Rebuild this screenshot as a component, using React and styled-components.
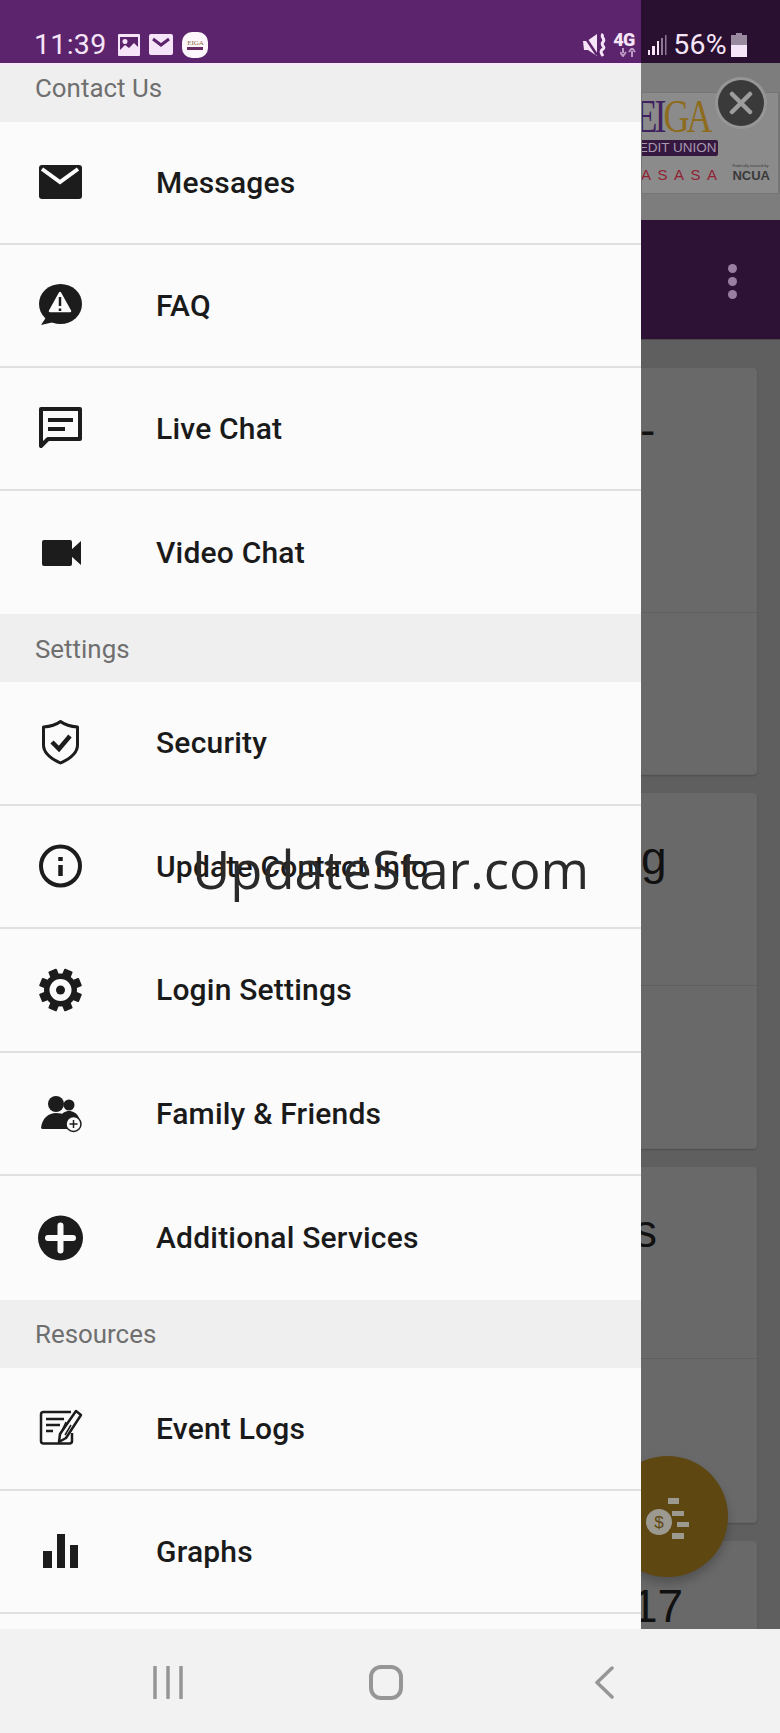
import React from 'react'
import styled, { createGlobalStyle } from 'styled-components'

const GlobalStyle = createGlobalStyle`
  html, body {
    margin: 0;
    padding: 0;
    background: #f2f2f2;
    font-family: Roboto, "Liberation Sans", sans-serif;
  }
`

const Screen = styled.div`
  position: relative;
  width: 780px;
  height: 1733px;
  display: flex;
  flex-direction: column;
  overflow: hidden;
`

/* status bar */
const StatusBar = styled.div`
  height: 63px;
  flex: none;
  box-sizing: border-box;
  padding: 28px 33px 0 34px;
  display: flex;
  justify-content: space-between;
  align-items: flex-start;
  background: linear-gradient(to right, #5c246c 641px, #2a1030 641px);
  color: #f6e4f8;
`

const StatusGroup = styled.div`
  display: flex;
  align-items: center;
  gap: ${p => p.$gap || 9}px;
`

const StatusText = styled.span`
  font-size: 28.5px;
  line-height: 34px;
  letter-spacing: 0.3px;
  margin-right: ${p => p.$after || 0}px;
`

const AppBadge = styled.div`
  width: 26px;
  height: 26px;
  border-radius: 10px;
  background: #fdf7fb;
  display: flex;
  flex-direction: column;
  align-items: center;
  justify-content: center;
  font-family: "Liberation Serif", serif;
  font-size: 7px;
  line-height: 7px;
  color: #8a6a40;
  &::after {
    content: '';
    width: 16px;
    height: 3px;
    background: #6a2b62;
  }
`

const NetworkType = styled.div`
  width: 28px;
  display: flex;
  flex-direction: column;
  overflow: hidden;
  font-size: 18px;
  line-height: 14px;
  font-weight: 900;
  letter-spacing: -0.5px;
  white-space: nowrap;
  svg { margin: 1px 0 0 7px; }
`

/* drawer and what is dimmed behind it */
const Body = styled.div`
  flex: 1;
  min-height: 0;
  display: flex;
`

const Drawer = styled.nav`
  width: 641px;
  flex: none;
  background: #fbfbfb;
  overflow: hidden;
  border-top: 2px solid #f9e9fb;
  box-sizing: border-box;
`

const SectionHeader = styled.div`
  height: ${p => p.$height}px;
  box-sizing: border-box;
  background: #efefef;
  padding: ${p => p.$drop || 0}px 0 ${p => p.$lift || 0}px 35px;
  display: flex;
  align-items: center;
  font-size: 25.9px;
  color: #6f6f6f;
`

const Row = styled.div`
  height: ${p => p.$height}px;
  box-sizing: border-box;
  padding-left: 36px;
  display: flex;
  align-items: center;
  gap: 72px;
  border-bottom: ${p => (p.$last ? 'none' : '2px solid #e0e0e0')};
  font-size: 30px;
  font-weight: 500;
  letter-spacing: 0.2px;
  color: #1a1a1a;
  white-space: nowrap;
`

const RowIcon = styled.svg`
  width: 48px;
  height: 48px;
  flex: none;
`

const Behind = styled.div`
  position: relative;
  flex: 1;
  min-width: 0;
  overflow: hidden;
  background: #5f5f5f;
`

const TopStrip = styled.div`
  height: 157px;
  box-sizing: border-box;
  padding-top: 29px;
  background: #7d7d7d;
`

const Ad = styled.div`
  height: 102px;
  box-sizing: border-box;
  border: 1px solid #767676;
  border-right-width: 2px;
  background: #8b8b8b;
  display: flex;
  justify-content: flex-end;
  align-items: flex-end;
  gap: 14px;
  padding: 0 8px 10px 0;
  overflow: hidden;
  white-space: nowrap;
`

const LogoBlock = styled.div`
  display: flex;
  flex-direction: column;
  align-items: flex-end;
`

const LogoWord = styled.div`
  font-family: "Liberation Serif", serif;
  font-size: 36px;
  line-height: 38px;
  letter-spacing: -3px;
  color: #8d6c1e;
  margin-right: 9px;
  transform: scaleY(1.27);
  transform-origin: center 70%;
  span { color: #3f2160; }
`

const LogoBand = styled.div`
  background: #35183f;
  color: #a99ab0;
  font-family: "Liberation Sans", sans-serif;
  font-size: 13.5px;
  line-height: 16px;
  padding: 0 2px;
  border-radius: 2px;
  margin-top: 2px;
`

const LogoSlogan = styled.div`
  color: #8f2233;
  font-family: "Liberation Sans", sans-serif;
  font-size: 15px;
  line-height: 16px;
  letter-spacing: 6.5px;
  margin-top: 11px;
  margin-right: -5px;
`

const Insured = styled.div`
  color: #3a3a3a;
  font-family: "Liberation Sans", sans-serif;
  font-weight: 700;
  font-size: 13px;
  line-height: 14px;
  small {
    display: block;
    font-size: 4px;
    line-height: 6px;
    font-weight: 400;
  }
`

const AppHeader = styled.div`
  height: 120px;
  background: #2e1236;
  box-sizing: border-box;
  padding: 44px 0 0 87px;
  display: flex;
  flex-direction: column;
  gap: 4px;
  border-bottom: 1px solid #4a4a4a;
`

const MenuDot = styled.span`
  width: 9px;
  height: 9px;
  border-radius: 50%;
  background: #9a7fa3;
`

const CardList = styled.div`
  padding-top: 28px;
  width: 116px;
  display: flex;
  flex-direction: column;
  gap: 18px;
`

const Card = styled.div`
  height: ${p => p.$height}px;
  background: #696969;
  border-radius: 0 4px 4px 0;
  box-shadow: 0 1px 2px rgba(0, 0, 0, 0.18);
  overflow: hidden;
  box-sizing: border-box;
  border-bottom: 1px solid #646464;
`

const CardTop = styled.div`
  height: ${p => p.$height}px;
  box-sizing: border-box;
  border-bottom: 1px solid #5f5f5f;
  padding-top: ${p => p.$top}px;
  margin-left: ${p => p.$shift || 0}px;
  font-family: "Liberation Sans", sans-serif;
  font-size: 46px;
  line-height: 48px;
  color: #111;
`

const Fab = styled.div`
  position: absolute;
  left: -34px;
  top: 1393px;
  width: 121px;
  height: 121px;
  border-radius: 50%;
  background: #5f4712;
  box-shadow: 0 6px 10px rgba(0, 0, 0, 0.22);
  svg { position: absolute; left: 37px; top: 40px; }
`

const CloseButton = styled.div`
  position: absolute;
  left: 718px;
  top: 80px;
  width: 46px;
  height: 46px;
  box-shadow: 0 0 0 3px #969696;
  border-radius: 50%;
  background: #3a3a3a;
  display: flex;
  align-items: center;
  justify-content: center;
`

const Watermark = styled.div`
  position: absolute;
  left: 192px;
  top: 832px;
  font-family: "Open Sans", sans-serif;
  font-size: 52.5px;
  line-height: 74px;
  color: #2a2a2a;
  white-space: nowrap;
`

/* bottom navigation */
const NavBar = styled.div`
  height: 104px;
  flex: none;
  box-sizing: border-box;
  background: #f2f2f2;
  padding: 2px 0 0 59px;
  display: grid;
  grid-template-columns: repeat(3, 218px);
  justify-items: center;
  align-items: center;
`

const gearTeeth = [22.5, 67.5, 112.5, 157.5, 202.5, 247.5, 292.5, 337.5]

const contactRows = [
  {
    label: 'Messages',
    icon: (
      <>
        <rect x='3' y='6' width='43' height='34' rx='3' fill='#1c1c1c' />
        <path d='M6 10l18 13 18-13' fill='none' stroke='#fbfbfb' strokeWidth='4' />
      </>
    )
  },
  {
    label: 'FAQ',
    icon: (
      <>
        <ellipse cx='24.5' cy='22' rx='21.5' ry='20' fill='#1c1c1c' />
        <path d='M11 34L5 43l13-3z' fill='#1c1c1c' />
        <path d='M24 11L14 29h20z' fill='#fbfbfb' stroke='#fbfbfb' strokeWidth='2.5' strokeLinejoin='round' />
        <path d='M24 15v9M24 26.500v2.500' stroke='#1c1c1c' strokeWidth='2.500' />
      </>
    )
  },
  {
    label: 'Live Chat',
    icon: (
      <>
        <path d='M5 4h39v30H12l-7 7z' fill='none' stroke='#1c1c1c' strokeWidth='4' strokeLinejoin='round' />
        <path d='M12 15h25M12 24h17' stroke='#1c1c1c' strokeWidth='4' />
      </>
    )
  },
  {
    label: 'Video Chat',
    icon: (
      <>
        <rect x='6' y='11' width='30' height='26' rx='2' fill='#1c1c1c' />
        <path d='M35 21l10-9v24l-10-9z' fill='#1c1c1c' />
      </>
    )
  }
]

const settingsRows = [
  {
    label: 'Security',
    icon: (
      <>
        <path d='M24.500 2.500c4 3 10 5 17 5.500v18c0 8-8 14-17 18-9-4-17-10-17-18V8c7-.5 13-2.500 17-5.500z' fill='none' stroke='#1c1c1c' strokeWidth='3' strokeLinejoin='round' />
        <path d='M16 23l7 7 11-13' fill='none' stroke='#1c1c1c' strokeWidth='4.500' />
      </>
    )
  },
  {
    label: 'Update Contact Info',
    icon: (
      <>
        <circle cx='24.500' cy='24' r='19.500' fill='none' stroke='#1c1c1c' strokeWidth='4' />
        <path d='M24.500 15v4M24.500 23v11' stroke='#1c1c1c' strokeWidth='4.500' />
      </>
    )
  },
  {
    label: 'Login Settings',
    icon: (
      <>
        <circle cx='24.500' cy='24' r='16.500' fill='#1c1c1c' />
        {gearTeeth.map(angle => (
          <rect key={angle} x='20' y='2.500' width='9' height='10' rx='1' fill='#1c1c1c' transform={`rotate(${angle} 24.500 24)`} />
        ))}
        <circle cx='24.500' cy='24' r='11' fill='#fbfbfb' />
        <circle cx='24.500' cy='24' r='4.500' fill='#1c1c1c' />
      </>
    )
  },
  {
    label: 'Family & Friends',
    icon: (
      <>
        <circle cx='33' cy='16' r='5.500' fill='#1c1c1c' />
        <path d='M24 30c1-6 5-8 9-8s8 2 10 7l-5 6H24z' fill='#1c1c1c' />
        <circle cx='20' cy='15' r='8' fill='#1c1c1c' />
        <path d='M5 39c1-10 8-15 15-15s13 3 14 9l-3 7H8c-2 0-3-.5-3-1z' fill='#1c1c1c' />
        <circle cx='37.500' cy='35' r='7.500' fill='#fbfbfb' stroke='#1c1c1c' strokeWidth='1.500' />
        <path d='M33.500 35h8M37.500 31v8' stroke='#1c1c1c' strokeWidth='1.500' />
      </>
    )
  },
  {
    label: 'Additional Services',
    icon: (
      <>
        <circle cx='24.500' cy='24' r='22.500' fill='#1c1c1c' />
        <path d='M12 24h25M24.500 11.500v25' stroke='#fbfbfb' strokeWidth='6' strokeLinecap='round' />
      </>
    )
  }
]

const resourceRows = [
  {
    label: 'Event Logs',
    icon: (
      <>
        <path d='M36 29v8c0 1.500-1 2.500-2.500 2.500H7.500C6 39.500 5 38.500 5 37V10.500C5 9 6 8 7.500 8H35' fill='none' stroke='#1c1c1c' strokeWidth='2.500' />
        <path d='M10 15h18M10 21h14M10 27h7' stroke='#1c1c1c' strokeWidth='2.500' />
        <path d='M40 7l5 4-15 23-7 4 1-8z' fill='#fbfbfb' stroke='#1c1c1c' strokeWidth='2.500' strokeLinejoin='round' />
        <path d='M30 18l-6 13M35 21l-6 10' stroke='#1c1c1c' strokeWidth='1.500' />
      </>
    )
  },
  {
    label: 'Graphs',
    icon: (
      <path d='M7 24h9v17H7zM21 7h8v34h-8zM34 18h8v23h-8z' fill='#1c1c1c' />
    )
  }
]

const MenuRows = ({ rows, height, lined }) => rows.map((row, i) => (
  <Row key={row.label} $height={height} $last={!lined && i === rows.length - 1}>
    <RowIcon viewBox='0 0 48 48'>{row.icon}</RowIcon>
    {row.label}
  </Row>
))

const App = () => (
  <Screen>
    <GlobalStyle />
    <StatusBar>
      <StatusGroup>
        <StatusText $after={3}>11:39</StatusText>
        <svg width='22' height='22' viewBox='0 0 22 22'>
          <path fillRule='evenodd' fill='#f6e4f8' d='M1 0h20a1 1 0 0 1 1 1v20a1 1 0 0 1-1 1H1a1 1 0 0 1-1-1V1a1 1 0 0 1 1-1zM2 3v13l5-5 4 3 5-5 4 4V3zM7 5a2.500 2.500 0 1 1 0 5 2.500 2.500 0 0 1 0-5z' />
        </svg>
        <svg width='24' height='22' viewBox='0 0 24 22'>
          <rect width='24' height='21' rx='2' fill='#f6e4f8' />
          <path d='M4 5l8 6 8-6' fill='none' stroke='#5c246c' strokeWidth='3' />
        </svg>
        <AppBadge>EIGA</AppBadge>
      </StatusGroup>
      <StatusGroup $gap={6}>
        <svg width='24' height='24' viewBox='0 0 24 24'>
          <path d='M0 8h4l10-7v22L5 17H1z' fill='#f6e4f8' />
          <path d='M0 1l14 21' stroke='#5c246c' strokeWidth='2.500' />
          <path d='M20 1c-3 3 3 5 0 8s3 5 0 7-2 4 0 7' fill='none' stroke='#f6e4f8' strokeWidth='3' />
        </svg>
        <NetworkType>
          4G
          <svg width='16' height='9' viewBox='0 0 16 9'>
            <path d='M3 0v5M0 4l3 4 3-4M12 9V3M9 4l3-4 3 4' fill='none' stroke='#bc9bc6' strokeWidth='2' />
          </svg>
        </NetworkType>
        <svg width='20' height='21' viewBox='0 0 20 21'>
          <path d='M1 15h2v5H1zM5 11h3v9H5zM10 6h2v14h-2z' fill='#f6e4f8' />
          <path d='M14 3h2v17h-2zM18 0h1.500v20H18z' fill='#8f7796' />
        </svg>
        <StatusText $after={-2}>56%</StatusText>
        <svg width='16' height='24' viewBox='0 0 16 24'>
          <path d='M5 0h6v2h5v10H0V2h5z' fill='#9a8aa0' />
          <rect y='12' width='16' height='12' fill='#f6e4f8' />
        </svg>
      </StatusGroup>
    </StatusBar>

    <Body>
      <Drawer>
        <SectionHeader $height={57} $lift={12}>Contact Us</SectionHeader>
        <MenuRows rows={contactRows} height={123} />
        <SectionHeader $height={68} $drop={2}>Settings</SectionHeader>
        <MenuRows rows={settingsRows} height={123.5} />
        <SectionHeader $height={68}>Resources</SectionHeader>
        <MenuRows rows={resourceRows} height={123} lined />
      </Drawer>

      <Behind>
        <TopStrip>
          <Ad>
            <LogoBlock>
              <LogoWord><span>EI</span>GA</LogoWord>
              <LogoBand>EDIT UNION</LogoBand>
              <LogoSlogan>ASASA</LogoSlogan>
            </LogoBlock>
            <Insured>
              <small>Federally insured by</small>
              NCUA
            </Insured>
          </Ad>
        </TopStrip>
        <AppHeader>
          <MenuDot />
          <MenuDot />
          <MenuDot />
        </AppHeader>
        <CardList>
          <Card $height={407}>
            <CardTop $height={245} $top={38} $shift={-1}>-</CardTop>
          </Card>
          <Card $height={356}>
            <CardTop $height={193} $top={41}>g</CardTop>
          </Card>
          <Card $height={356}>
            <CardTop $height={192} $top={40} $shift={-7}>s</CardTop>
          </Card>
          <Card $height={100}>
            <CardTop $height={100} $top={41} $shift={-9}>17</CardTop>
          </Card>
        </CardList>
        <Fab>
          <svg width='50' height='44' viewBox='0 0 50 44'>
            <circle cx='15' cy='26' r='13' fill='#9c9a90' />
            <text x='15' y='32' textAnchor='middle' fontSize='17' fontFamily='Liberation Sans' fill='#5f4712'>$</text>
            <path d='M24 2h11v6H24zM28 15h12v5H28zM33 26h12v5H33zM28 37h12v6H28z' fill='#9c9a90' />
          </svg>
        </Fab>
      </Behind>
    </Body>

    <NavBar>
      <svg width='30' height='33' viewBox='0 0 30 33'>
        <path d='M2 1v31M15 1v31M28 1v31' stroke='#969696' strokeWidth='3.500' strokeLinecap='round' />
      </svg>
      <svg width='34' height='35' viewBox='0 0 34 35'>
        <rect x='2' y='2' width='30' height='31' rx='10' fill='none' stroke='#969696' strokeWidth='4' />
      </svg>
      <svg width='20' height='33' viewBox='0 0 20 33'>
        <path d='M18 2L3 16.500 18 31' fill='none' stroke='#969696' strokeWidth='3.500' strokeLinecap='round' strokeLinejoin='round' />
      </svg>
    </NavBar>

    <CloseButton>
      <svg width='24' height='24' viewBox='0 0 24 24'>
        <path d='M3 3l18 18M21 3L3 21' stroke='#9d9d9d' strokeWidth='4.500' strokeLinecap='round' />
      </svg>
    </CloseButton>
    <Watermark>UpdateStar.com</Watermark>
  </Screen>
)

export default App
